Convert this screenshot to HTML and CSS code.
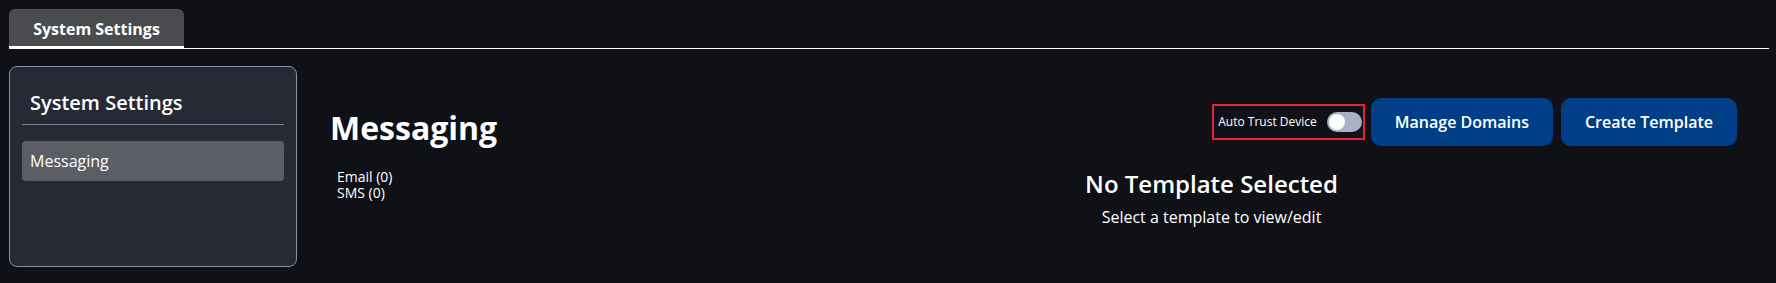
FILE: index.html
```html
<!DOCTYPE html>
<html lang="en">
<head>
<meta charset="utf-8">
<title>System Settings</title>
<link rel="stylesheet" href="styles.css">
</head>
<body>
<div class="page">
  <div class="tabs">
    <div class="tab">System Settings</div>
  </div>
  <div class="layout">
    <aside class="sidebar">
      <h2 class="sidebar-title">System Settings</h2>
      <div class="sidebar-item">Messaging</div>
    </aside>
    <main class="main">
      <div class="header">
        <h1 class="title">Messaging</h1>
        <div class="actions">
          <label class="trust">
            <span class="trust-label">Auto Trust Device</span>
            <span class="switch"><span class="knob"></span></span>
          </label>
          <button class="btn">Manage Domains</button>
          <button class="btn">Create Template</button>
        </div>
      </div>
      <div class="content">
        <ul class="list">
          <li>Email (0)</li>
          <li>SMS (0)</li>
        </ul>
        <div class="detail">
          <div class="detail-title">No Template Selected</div>
          <div class="detail-sub">Select a template to view/edit</div>
        </div>
      </div>
    </main>
  </div>
</div>
</body>
</html>
```

FILE: styles.css
```css
* { box-sizing: border-box; }
html, body {
  margin: 0;
  background: #101116;
  color: #ffffff;
  font-family: "Open Sans", "Noto Sans", sans-serif;
}
.page {
  padding: 9px 7px 0 9px;
}
.tabs {
  display: flex;
  border-bottom: 1px solid #ffffff;
  height: 40px;
}
.tab {
  width: 175px;
  height: 40px;
  background: #4a4b4f;
  border-radius: 6px 6px 0 0;
  border-bottom: 3px solid #ffffff;
  font-size: 16px;
  font-weight: 700;
  display: flex;
  align-items: center;
  justify-content: center;
  padding-top: 2px;
}
.layout {
  display: flex;
  margin-top: 17px;
}
.sidebar {
  width: 288px;
  height: 201px;
  flex: none;
  background: #262a34;
  border: 1px solid #8790a8;
  border-radius: 8px;
  padding: 0 12px;
}
.sidebar-title {
  margin: 0;
  font-size: 20px;
  font-weight: 600;
  line-height: 27px;
  padding: 22px 8px 8px;
  border-bottom: 1px solid #7c8396;
}
.sidebar-item {
  margin-top: 16px;
  height: 40px;
  background: #5c5e66;
  border-radius: 4px;
  font-size: 16px;
  padding: 0 8px;
  display: flex;
  align-items: center;
}
.main {
  flex: 1;
  padding: 32px 32px 0 33px;
}
.header {
  display: flex;
  align-items: center;
  justify-content: space-between;
  height: 48px;
}
.title {
  margin: 0;
  font-size: 32px;
  font-weight: 700;
  line-height: 43px;
  margin-top: 10px;
}
.actions {
  display: flex;
  align-items: center;
  gap: 8px;
}
.trust {
  display: flex;
  align-items: center;
  gap: 10px;
  height: 36px;
  border: 2px solid #e8213d;
  padding: 0 1px 0 4px;
  margin-right: -2px;
}
.trust-label {
  font-size: 12px;
  line-height: 16px;
}
.switch {
  width: 35px;
  height: 20px;
  border-radius: 10px;
  background: #a9b1c7;
  display: flex;
  align-items: center;
  padding-left: 2px;
}
.knob {
  width: 16px;
  height: 16px;
  border-radius: 50%;
  background: #ffffff;
}
.btn {
  height: 48px;
  border: none;
  border-radius: 10px;
  background: #003f87;
  color: #ffffff;
  font-family: inherit;
  font-size: 16px;
  font-weight: 600;
  padding: 0 24px;
}
.content {
  display: grid;
  grid-template-columns: 356px 1fr;
  margin-top: 23px;
}
.list {
  list-style: none;
  margin: 0;
  padding: 0 0 0 7px;
  font-size: 14px;
  line-height: 16px;
}
.detail {
  text-align: center;
}
.detail-title {
  font-size: 24px;
  font-weight: 600;
  line-height: 30px;
}
.detail-sub {
  margin-top: 8px;
  font-size: 16px;
  line-height: 20px;
}
```
